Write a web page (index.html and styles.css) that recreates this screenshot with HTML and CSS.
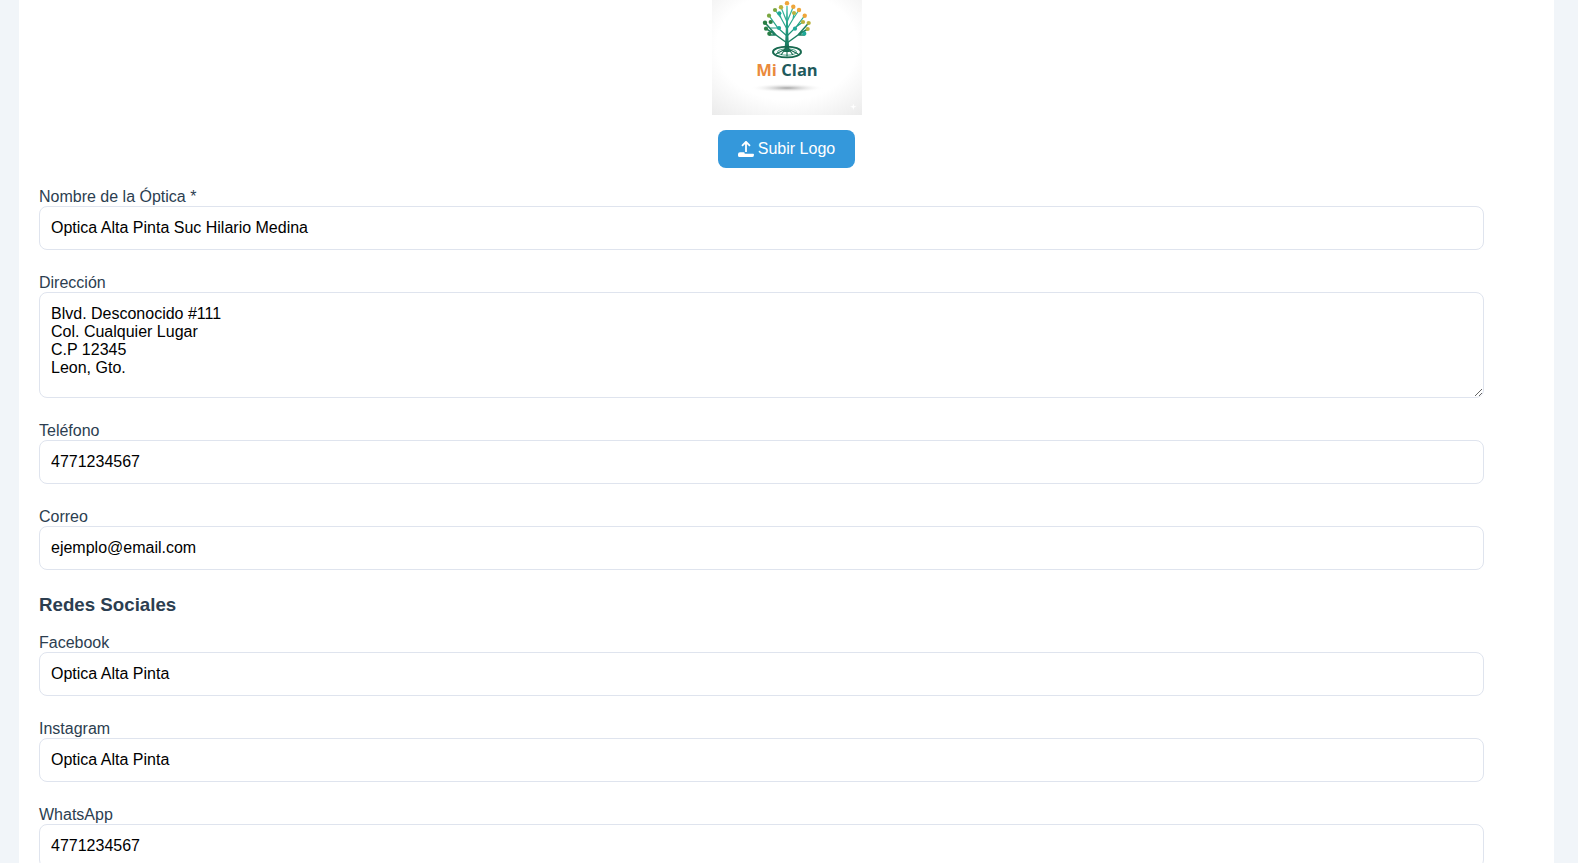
FILE: index.html
```html
<!DOCTYPE html>
<html lang="es">
<head>
    <meta charset="UTF-8">
    <meta name="viewport" content="width=device-width, initial-scale=1.0">
    <title>Datos de la Óptica</title>
    <link rel="stylesheet" href="styles.css">
</head>
<body>
    <main class="card">
        <!-- Logo -->
        <div class="logo-section">
            <svg class="logo" viewBox="0 0 150 115" aria-label="Logo Mi Clan">
                <defs>
                    <radialGradient id="logoBg" cx="50%" cy="40%" r="78%">
                        <stop offset="0.6" stop-color="#ffffff"/>
                        <stop offset="1" stop-color="#ebebeb"/>
                    </radialGradient>
                    <radialGradient id="logoShadow">
                        <stop offset="0" stop-color="#a3a3a3"/>
                        <stop offset="1" stop-color="#ffffff" stop-opacity="0"/>
                    </radialGradient>
                    <linearGradient id="trunk" gradientUnits="userSpaceOnUse" x1="75" y1="5" x2="75" y2="55">
                        <stop offset="0" stop-color="#3cc0a8"/>
                        <stop offset="0.5" stop-color="#1f9a80"/>
                        <stop offset="1" stop-color="#14664c"/>
                    </linearGradient>
                </defs>
                <rect width="150" height="115" fill="url(#logoBg)"/>
                <path d="M141.3 103.5L142 106L144.5 106.7L142 107.4L141.3 110L140.6 107.4L138 106.7L140.6 106Z" fill="#ffffff"/>
                <ellipse cx="75" cy="88" rx="37" ry="4.5" fill="url(#logoShadow)"/>
                <!-- tronco y ramas -->
                <path d="M72 52C73.4 44 73.8 34 74.4 6H75.6C76.2 34 76.6 44 78 52Z" fill="url(#trunk)"/>
                <g fill="none" stroke="url(#trunk)" stroke-width="1.2" stroke-linecap="round">
                    <path d="M75 22L69 7.3M75 22L81.3 6.7"/>
                    <path d="M75 29L69 18L63 10M69 18L67.3 13.3M75 29L81 19L87 10M81 19L82 13"/>
                    <path d="M75 36L66 28L57 15.7M66 28H58.7M75 36L84 27L92.7 15.7M84 27L91 22M84 27L83 28.7"/>
                </g>
                <g fill="none" stroke="#1c7f62" stroke-width="1.5" stroke-linecap="round">
                    <path d="M75 43L64 35L53 22.7M64 35L54 28.7M64 35H57.3M75 43L86 35L96.7 23M86 35L95.7 29M86 35H92.3"/>
                </g>
                <ellipse cx="75" cy="52" rx="14" ry="5.4" fill="none" stroke="#17694f" stroke-width="1.9"/>
                <ellipse cx="75" cy="52" rx="9.5" ry="3.2" fill="none" stroke="#3a9a7c" stroke-width="0.9"/>
                <path d="M74 48L69 55M76 48L81 55M75 48V56.5M73.5 49L64 54M76.5 49L86 54" fill="none" stroke="#17694f" stroke-width="1.1"/>
                <!-- hojas -->
                <g fill="#efa63a">
                    <circle cx="75" cy="3.3" r="2.2"/><circle cx="81.3" cy="6.7" r="2.2"/><circle cx="87" cy="10" r="2.2"/><circle cx="92.7" cy="15.7" r="2.2"/>
                </g>
                <g fill="#b9b23d">
                    <circle cx="69" cy="7.3" r="2.2"/><circle cx="82" cy="13" r="2.1"/><circle cx="91" cy="22" r="2.1"/><circle cx="96.7" cy="23" r="2.1"/><circle cx="95.7" cy="29" r="2.1"/>
                </g>
                <g fill="#1fa999">
                    <circle cx="67.3" cy="13.3" r="2.1"/><circle cx="83" cy="28.7" r="2.1"/><circle cx="67" cy="28" r="2.1"/><circle cx="92.3" cy="33.7" r="2.1"/>
                </g>
                <g fill="#7aa63f">
                    <circle cx="63" cy="10" r="2.1"/><circle cx="57" cy="15.7" r="2.1"/>
                </g>
                <g fill="#2a7f45">
                    <circle cx="53" cy="22.7" r="2.2"/><circle cx="58.7" cy="22" r="2.1"/><circle cx="54" cy="28.7" r="2.1"/><circle cx="57.3" cy="33.7" r="2.1"/>
                </g>
                <text class="logo-text" x="75" y="76" text-anchor="middle"><tspan class="logo-mi">Mi</tspan> <tspan class="logo-clan">Clan</tspan></text>
            </svg>
            <button class="btn-upload" type="button">
                <svg class="btn-icon" viewBox="0 0 16 16">
                    <path d="M8 0.8V11M4 4.8L8 0.8L12 4.8" fill="none" stroke="#fff" stroke-width="1.8"/>
                    <path d="M2 11.2H6.4V11.8Q6.4 12.8 7.4 12.8H15.2Q16 12.8 16 13.8Q16 16 14.4 16H1.6Q0 16 0 14.4V13.2Q0 11.2 2 11.2Z" fill="#fff"/>
                </svg>
                Subir Logo
            </button>
        </div>

        <!-- Datos generales -->
        <div class="form-group">
            <label>Nombre de la Óptica *</label>
            <input type="text" value="Optica Alta Pinta Suc Hilario Medina">
        </div>
        <div class="form-group">
            <label>Dirección</label>
            <textarea>Blvd. Desconocido #111
Col. Cualquier Lugar
C.P 12345
Leon, Gto.</textarea>
        </div>
        <div class="form-group">
            <label>Teléfono</label>
            <input type="text" value="4771234567">
        </div>
        <div class="form-group">
            <label>Correo</label>
            <input type="text" value="ejemplo@email.com">
        </div>

        <!-- Redes sociales -->
        <h3>Redes Sociales</h3>
        <div class="form-group">
            <label>Facebook</label>
            <input type="text" value="Optica Alta Pinta">
        </div>
        <div class="form-group">
            <label>Instagram</label>
            <input type="text" value="Optica Alta Pinta">
        </div>
        <div class="form-group">
            <label>WhatsApp</label>
            <input type="text" value="4771234567">
        </div>
    </main>
</body>
</html>
```

FILE: styles.css
```css
* {
    margin: 0;
    padding: 0;
    box-sizing: border-box;
    font-family: "Liberation Sans", Arial, sans-serif;
}

html, body {
    height: 100vh;
    overflow: hidden;
}

body {
    background-color: #f1f5f9;
    padding: 0 24px 0 19px;
}

.card {
    background-color: white;
    padding: 0 70px 0 20px;
    min-height: 100%;
}

/* Logo */
.logo-section {
    display: flex;
    flex-direction: column;
    align-items: center;
    gap: 15px;
    margin: 0 -50px 20px 0;
}

.logo {
    display: block;
    width: 150px;
    height: 115px;
}

.logo-text tspan {
    font-family: "Open Sans", sans-serif;
    font-size: 16.5px;
    font-weight: 700;
}

.logo-mi {
    fill: #ea8a3c;
}

.logo-clan {
    fill: #1f5a5c;
}

.btn-upload {
    display: flex;
    align-items: center;
    justify-content: center;
    gap: 4px;
    width: 137px;
    height: 38px;
    background-color: #3498db;
    color: white;
    border: none;
    border-radius: 8px;
    font-size: 16px;
}

.btn-icon {
    width: 16px;
    height: 16px;
    margin-top: -1px;
}

/* Formulario */
.form-group {
    margin-bottom: 24px;
}

label {
    display: block;
    height: 18px;
    line-height: 18px;
    font-size: 16px;
    color: #2c3e50;
}

input, textarea {
    display: block;
    width: 100%;
    height: 44px;
    padding: 12px 11px;
    border: 1px solid #dfe4ee;
    border-radius: 8px;
    background-color: white;
    color: black;
    font-size: 16px;
    line-height: 18px;
}

textarea {
    height: 106px;
}

h3 {
    height: 22px;
    line-height: 22px;
    margin-bottom: 18px;
    font-size: 18.72px;
    font-weight: bold;
    color: #2c3e50;
}
```
